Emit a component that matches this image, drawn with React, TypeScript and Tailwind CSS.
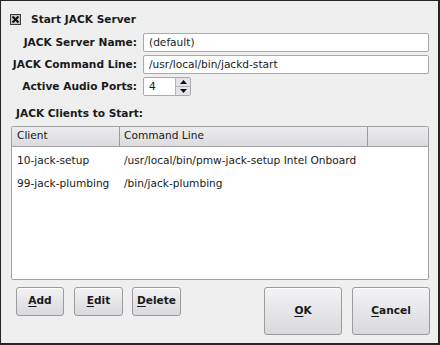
import React from "react";

const font = { fontFamily: '"DejaVu Sans", "Liberation Sans", sans-serif' };

// Mnemonic label: first letter underlined like the toolkit draws it
function Mnemonic({ text, at = 0 }: { text: string; at?: number }) {
  return (
    <span>
      {text.slice(0, at)}
      <span className="underline underline-offset-2">{text[at]}</span>
      {text.slice(at + 1)}
    </span>
  );
}

function Button({ label, className }: { label: string; className: string }) {
  return (
    <button
      type="button"
      className={`flex items-center justify-center rounded-[3px] border border-[#9b9b9b] bg-gradient-to-b from-[#f3f3f5] to-[#d9d9de] text-[10.6px] font-bold text-[#1a1a1a] shadow-[inset_0_1px_0_#ffffff] ${className}`}
    >
      <Mnemonic text={label} />
    </button>
  );
}

function Field({ label, value }: { label: string; value: string }) {
  return (
    <div className="flex items-center h-[19px]">
      <div className="w-[127px] whitespace-nowrap text-right text-[10.6px] font-bold text-[#1a1a1a] leading-none">{label}</div>
      <div className="ml-[6px] flex h-[19px] w-[286px] items-center rounded-[2px] border border-[#a9a9a9] bg-white px-[5px] text-[10.6px] text-[#1a1a1a]">
        {value}
      </div>
    </div>
  );
}

export default function App() {
  const clients = [
    { name: "10-jack-setup", cmd: "/usr/local/bin/pmw-jack-setup Intel Onboard" },
    { name: "99-jack-plumbing", cmd: "/bin/jack-plumbing" },
  ];

  return (
    <div
      style={font}
      className="w-[440px] h-[345px] bg-[#efefef] border-t border-l border-r-2 border-b-2 border-[#262626] overflow-hidden"
    >
      {/* start checkbox */}
      <div className="flex items-center pl-[9px] pt-[13px]">
        <div className="flex h-[11px] w-[11px] items-center justify-center border border-[#3a3a3a] bg-[#c8c8c8]">
          <svg width="9" height="9" viewBox="0 0 9 9">
            <path d="M1.5 1.5 L7.5 7.5 M7.5 1.5 L1.5 7.5" stroke="#111" strokeWidth="2" />
          </svg>
        </div>
        <span className="ml-[10px] text-[10.6px] font-bold text-[#1a1a1a] leading-none">Start JACK Server</span>
      </div>

      <div className="mt-[8px] flex flex-col gap-[3px] pl-[9px]">
        <Field label="JACK Server Name:" value="(default)" />
        <Field label="JACK Command Line:" value="/usr/local/bin/jackd-start" />
        <div className="flex items-center h-[19px]">
          <div className="w-[127px] whitespace-nowrap text-right text-[10.6px] font-bold text-[#1a1a1a] leading-none">Active Audio Ports:</div>
          <div className="ml-[6px] flex h-[19px] w-[48px] items-stretch rounded-[2px] border border-[#a9a9a9] bg-white">
            <div className="flex flex-1 items-center px-[5px] text-[10.6px] text-[#1a1a1a]">4</div>
            <div className="flex w-[15px] flex-col border-l border-[#b5b5b5] bg-[#e4e4e6]">
              <div className="flex flex-1 items-center justify-center border-b border-[#b5b5b5]">
                <svg width="7" height="4" viewBox="0 0 7 4">
                  <path d="M0 4 L3.5 0 L7 4 Z" fill="#111" />
                </svg>
              </div>
              <div className="flex flex-1 items-center justify-center">
                <svg width="7" height="4" viewBox="0 0 7 4">
                  <path d="M0 0 L3.5 4 L7 0 Z" fill="#111" />
                </svg>
              </div>
            </div>
          </div>
        </div>
      </div>

      <div className="mt-[12px] pl-[15px] text-[10.6px] font-bold text-[#1a1a1a] leading-none">JACK Clients to Start:</div>

      {/* clients table */}
      <div className="ml-[10px] mt-[7px] h-[154px] w-[418px] rounded-[2px] border border-[#a3a3a3] bg-white">
        <div className="flex h-[20px] border-b border-[#a3a3a3] bg-gradient-to-b from-[#ececef] to-[#dcdce0] text-[10.6px] text-[#1a1a1a]">
          <div className="flex w-[108px] items-center border-r border-[#9a9a9a] pl-[5px]">Client</div>
          <div className="flex w-[248px] items-center border-r border-[#9a9a9a] pl-[4px]">Command Line</div>
          <div className="flex-1" />
        </div>
        <div className="pt-[3px] text-[10.6px] text-[#1a1a1a]">
          {clients.map((c) => (
            <div key={c.name} className="flex h-[23px] items-center">
              <div className="w-[108px] pl-[5px]">{c.name}</div>
              <div className="pl-[4px]">{c.cmd}</div>
            </div>
          ))}
        </div>
      </div>

      {/* buttons */}
      <div className="mt-[7px] flex items-start pl-[15px]">
        <Button label="Add" className="h-[29px] w-[48px]" />
        <Button label="Edit" className="ml-[10px] h-[29px] w-[49px]" />
        <Button label="Delete" className="ml-[9px] h-[29px] w-[49px]" />
        <Button label="OK" className="ml-[83px] h-[48px] w-[78px]" />
        <Button label="Cancel" className="ml-[10px] h-[48px] w-[78px]" />
      </div>
    </div>
  );
}
